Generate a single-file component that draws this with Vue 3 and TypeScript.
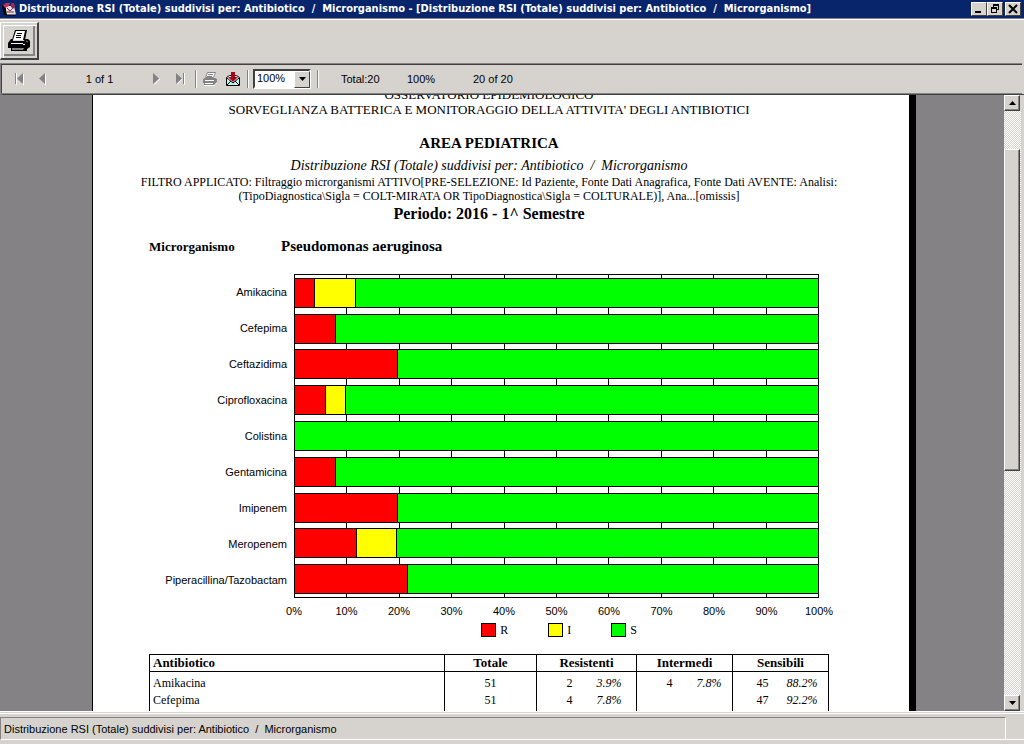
<script setup lang="ts">
import { ref } from 'vue'

interface Series {
  name: string
  r: number
  i: number
}

interface Row {
  name: string
  total: number
  r: [number, string] | null
  i: [number, string] | null
  s: [number, string] | null
}

const title = 'Distribuzione RSI (Totale) suddivisi per: Antibiotico  /  Microrganismo'
const zoom = ref('100%')

const series: Series[] = [
  { name: 'Amikacina', r: 3.9, i: 7.8 },
  { name: 'Cefepima', r: 7.8, i: 0 },
  { name: 'Ceftazidima', r: 19.6, i: 0 },
  { name: 'Ciprofloxacina', r: 5.9, i: 3.9 },
  { name: 'Colistina', r: 0, i: 0 },
  { name: 'Gentamicina', r: 7.8, i: 0 },
  { name: 'Imipenem', r: 19.6, i: 0 },
  { name: 'Meropenem', r: 11.8, i: 7.8 },
  { name: 'Piperacillina/Tazobactam', r: 21.6, i: 0 },
]

const ticks = Array.from({ length: 11 }, (_, n) => `${n * 10}%`)

const legend = [
  { key: 'r', label: 'R' },
  { key: 'i', label: 'I' },
  { key: 's', label: 'S' },
]

const rows: Row[] = [
  { name: 'Amikacina', total: 51, r: [2, '3.9%'], i: [4, '7.8%'], s: [45, '88.2%'] },
  { name: 'Cefepima', total: 51, r: [4, '7.8%'], i: null, s: [47, '92.2%'] },
]
</script>

<template>
  <div class="window">
    <header class="titlebar">
      <svg class="app-icon" viewBox="0 0 16 16" width="16" height="16" aria-hidden="true">
        <path d="M3 5h10l2 9H4z" fill="#e8e4e8" />
        <path d="M1 5l3-2 2 11H3z" fill="#000" />
        <path d="M2 4l3-2h4l-1 3-4 2z" fill="#c0305c" />
        <path d="M10 2h3l1 3-2 3-2-2z" fill="#a02850" />
        <path d="M6 7l3 3 4-4M6 11h7" stroke="#7a2440" fill="none" />
        <path d="M5 14h10" stroke="#000" />
      </svg>
      <h1>{{ title }} - [{{ title }}]</h1>
      <div class="caption-buttons">
        <button type="button" aria-label="Riduci a icona">
          <svg viewBox="0 0 12 10" width="12" height="10"><path d="M2 7h6v2H2z" /></svg>
        </button>
        <button type="button" aria-label="Ripristina">
          <svg viewBox="0 0 12 10" width="12" height="10">
            <path d="M4 0h6v6H8V5h1V2H5v1H4zM2 3h6v6H2zM3 5v3h4V5z" fill-rule="evenodd" />
          </svg>
        </button>
        <button type="button" class="close" aria-label="Chiudi">
          <svg viewBox="0 0 12 10" width="12" height="10">
            <path d="M2 1l8 8M10 1L2 9" stroke="#000" stroke-width="2" />
          </svg>
        </button>
      </div>
    </header>

    <div class="main-tools">
      <button type="button" class="print" aria-label="Stampa">
        <svg viewBox="0 0 22 23" width="22" height="23">
          <path d="M7 1h12l-2 10H4z" fill="#000" />
          <path d="M8 2h9l-2 9H5z" fill="#fff" />
          <path d="M9 4.500h5M8 6.500h5M8 8.500h5" stroke="#000" />
          <path d="M3 10h2v2h11l1-2h3l2 2v6l-3 2v2H3v-3H0v-5z" fill="#000" />
          <path d="M3 14.500h12M15 15.500h2" stroke="#fff" />
          <path d="M4 19h12l-1 2H4z" fill="#848284" />
          <path d="M18 12l2 1" stroke="#848284" />
        </svg>
      </button>
    </div>

    <nav class="report-tools">
      <button type="button" class="flat first" aria-label="Prima pagina">
        <svg viewBox="0 0 10 13" width="10" height="13">
          <path d="M2.500 1v12M9.500 2v11" stroke="#fff" />
          <path d="M1 1h1v11H1zM9 1v11L3 6.500z" fill="#848284" />
        </svg>
      </button>
      <button type="button" class="flat prev" aria-label="Pagina precedente">
        <svg viewBox="0 0 10 13" width="10" height="13">
          <path d="M8.500 2v11" stroke="#fff" />
          <path d="M8 1v11L2 6.500z" fill="#848284" />
        </svg>
      </button>
      <span class="pages">1 of 1</span>
      <button type="button" class="flat next" aria-label="Pagina successiva">
        <svg viewBox="0 0 10 13" width="10" height="13">
          <path d="M2 12.500L8 7" stroke="#fff" />
          <path d="M1 1v11l6-5.500z" fill="#848284" />
        </svg>
      </button>
      <button type="button" class="flat last" aria-label="Ultima pagina">
        <svg viewBox="0 0 10 13" width="10" height="13">
          <path d="M2 12.500L7 7M9.500 1v12" stroke="#fff" />
          <path d="M1 1v11l6-5.500zM8 1h1v11H8z" fill="#848284" />
        </svg>
      </button>
      <span class="sep"></span>
      <button type="button" class="flat" aria-label="Stampa report">
        <svg viewBox="0 0 16 16" width="16" height="16">
          <path d="M5 2h9l-2 5h3v5l-3 3H2v-3l-1-4 3-1z" fill="#fff" />
          <path d="M5.500 1.500h8l-2 5h-8zM6 3.500h5M5 5.500h5" stroke="#848284" fill="none" />
          <path d="M3 7h11l1 1v3l-3 3H2v-2H1V8zM3 9v1h9V9zM3 12v1h8v-1z" fill="#848284" fill-rule="evenodd" />
        </svg>
      </button>
      <button type="button" class="flat export" aria-label="Esporta">
        <svg viewBox="0 0 16 16" width="16" height="16">
          <path d="M1.500 6.500l3-2h7l3 2v8h-13z" fill="#fff" stroke="#000" />
          <path d="M2 7l6 5 6-5v7H2z" fill="#bdf3f3" />
          <path d="M2 14l4-4M14 14l-4-4M2 7l6 5 6-5" stroke="#000" fill="none" />
          <path d="M6 1h4v5h3L8 11 3 6h3z" fill="#a5041c" />
        </svg>
      </button>
      <span class="sep near"></span>
      <span class="zoom">
        <select v-model="zoom" aria-label="Zoom">
          <option>50%</option>
          <option>100%</option>
          <option>200%</option>
        </select>
        <span class="drop" aria-hidden="true">
          <svg viewBox="0 0 7 4" width="7" height="4"><path d="M0 0h7L3.500 4z" /></svg>
        </span>
      </span>
      <span class="sep near"></span>
      <span class="info total">Total:20</span>
      <span class="info percent">100%</span>
      <span class="info records">20 of 20</span>
    </nav>

    <main class="viewer">
      <div class="canvas">
        <article class="paper">
          <div class="heading">
            <p class="office">OSSERVATORIO EPIDEMIOLOGICO</p>
            <p class="office">SORVEGLIANZA BATTERICA E MONITORAGGIO DELLA ATTIVITA' DEGLI ANTIBIOTICI</p>
            <h2>AREA PEDIATRICA</h2>
            <p class="subtitle">{{ title }}</p>
            <p class="filter">
              FILTRO APPLICATO: Filtraggio microrganismi ATTIVO[PRE-SELEZIONE: Id Paziente, Fonte Dati Anagrafica, Fonte Dati AVENTE: Analisi:<br />
              (TipoDiagnostica\Sigla = COLT-MIRATA OR TipoDiagnostica\Sigla = COLTURALE)], Ana...[omissis]
            </p>
            <h3>Periodo: 2016 - 1^ Semestre</h3>
          </div>

          <div class="organism">
            <span class="caption">Microrganismo</span>
            <strong>Pseudomonas aeruginosa</strong>
          </div>

          <section class="chart" aria-label="Distribuzione RSI">
            <div class="names">
              <span v-for="s in series" :key="s.name">{{ s.name }}</span>
            </div>
            <div class="plot">
              <div class="grid"><i v-for="n in 10" :key="n"></i></div>
              <div class="bars">
                <div v-for="s in series" :key="s.name" class="bar">
                  <b v-if="s.r" class="r" :style="{ width: s.r + '%' }"></b>
                  <b v-if="s.i" class="i" :style="{ width: s.i + '%' }"></b>
                  <b class="s"></b>
                </div>
              </div>
            </div>
            <div class="scale">
              <div class="axis"><span v-for="t in ticks" :key="t">{{ t }}</span></div>
            </div>
            <div class="legend">
              <span v-for="l in legend" :key="l.key"><b :class="l.key"></b>{{ l.label }}</span>
            </div>
          </section>

          <table>
            <colgroup>
              <col class="c-name" />
              <col class="c-total" />
              <col class="c-count" /><col class="c-pct-wide" />
              <col class="c-count" /><col class="c-pct" />
              <col class="c-count" /><col class="c-pct" />
            </colgroup>
            <thead>
              <tr>
                <th class="name">Antibiotico</th>
                <th>Totale</th>
                <th colspan="2">Resistenti</th>
                <th colspan="2">Intermedi</th>
                <th colspan="2">Sensibili</th>
              </tr>
            </thead>
            <tbody>
              <tr v-for="row in rows" :key="row.name">
                <td class="name">{{ row.name }}</td>
                <td class="sum">{{ row.total }}</td>
                <template v-for="(v, n) in [row.r, row.i, row.s]" :key="n">
                  <td class="count">{{ v ? v[0] : '' }}</td>
                  <td class="pct"><em v-if="v">{{ v[1] }}</em></td>
                </template>
              </tr>
            </tbody>
          </table>
        </article>
      </div>

      <div class="scrollbar">
        <button type="button" aria-label="Scorri su">
          <svg viewBox="0 0 7 4" width="7" height="4"><path d="M0 4h7L3.500 0z" /></svg>
        </button>
        <div class="track"><div class="thumb"></div></div>
        <button type="button" aria-label="Scorri giù">
          <svg viewBox="0 0 7 4" width="7" height="4"><path d="M0 0h7L3.500 4z" /></svg>
        </button>
      </div>
    </main>

    <footer class="status">
      <span class="message">{{ title }}</span>
      <span class="corner"></span>
    </footer>
  </div>
</template>

<style>
body {
  margin: 0;
  background: #d6d3ce;
}
</style>

<style scoped>
.window {
  display: flex;
  flex-direction: column;
  height: 100vh;
  overflow: hidden;
  background: #d6d3ce;
  color: #000;
  font: 11px/14px "Liberation Sans", Arial, sans-serif;
}

.window * {
  box-sizing: border-box;
}

button {
  display: flex;
  align-items: center;
  justify-content: center;
  padding: 0;
  border: 1px solid;
  border-color: #fff #424142 #424142 #fff;
  border-radius: 0;
  background: #d6d3ce;
}

/* Title bar */
.titlebar {
  display: flex;
  align-items: center;
  flex: none;
  height: 18px;
  padding: 0 3px 0 1px;
  background: #08246b;
  color: #fff;
}

.titlebar h1 {
  flex: 1;
  min-width: 0;
  margin: 0 0 0 2px;
  overflow: hidden;
  white-space: pre;
  font: bold 11px/18px "DejaVu Sans Condensed", "DejaVu Sans", sans-serif;
}

.app-icon {
  flex: none;
}

.caption-buttons {
  display: flex;
}

.caption-buttons button {
  width: 16px;
  height: 14px;
}

.caption-buttons .close {
  margin-left: 2px;
}

/* Application toolbar */
.main-tools {
  flex: none;
  height: 45px;
  padding-top: 3px;
  border-top: 1px solid #848284;
  box-shadow: inset 0 2px 0 -1px #fff;
}

.print {
  width: 39px;
  height: 38px;
  border-width: 1px 2px 2px 1px;
  background: #d6d3ce;
  box-shadow: inset 2px 2px 0 #d6d3ce, inset 3px 3px 0 #fff, inset -2px -2px 0 #d6d3ce, inset -4px -4px 0 #848284;
}

/* Report toolbar */
.report-tools {
  display: flex;
  align-items: center;
  flex: none;
  height: 31px;
  margin-right: 2px;
  padding: 0 13px;
  border: solid #848284;
  border-width: 1px 0 1px 1px;
  box-shadow: inset 1px 1px 0 #424142;
  white-space: nowrap;
}

.flat {
  flex: none;
  border: 0;
  background: none;
}

.prev {
  margin-left: 13px;
}

.pages {
  width: 105px;
  text-align: center;
}

.last {
  margin-left: 13px;
}

.sep {
  flex: none;
  width: 2px;
  height: 18px;
  margin: 0 5px 0 10px;
  border-left: 1px solid #848284;
  border-right: 1px solid #fff;
}

.sep.near {
  margin: 0 4px 0 6px;
}

.export {
  margin-left: 7px;
}

.zoom {
  position: relative;
  flex: none;
  width: 58px;
  height: 20px;
}

.zoom select {
  appearance: none;
  width: 100%;
  height: 100%;
  padding: 0 0 1px 2px;
  border: 2px solid;
  border-color: #424142 #fff #fff #424142;
  border-radius: 0;
  background: #fff;
  color: #000;
  font: inherit;
}

.drop {
  position: absolute;
  top: 2px;
  right: 1px;
  bottom: 1px;
  display: flex;
  align-items: center;
  justify-content: center;
  width: 16px;
  border: 1px solid;
  border-color: #fff #424142 #424142 #fff;
  background: #d6d3ce;
  pointer-events: none;
}

.total {
  width: 66px;
  margin-left: 18px;
}

.percent {
  width: 66px;
}

/* Report viewer */
.viewer {
  display: flex;
  flex: 1;
  min-height: 0;
  padding-right: 3px;
  border-left: 3px solid #848284;
  border-top: 1px solid #424142;
}

.canvas {
  flex: 1;
  min-width: 0;
  padding: 0 88px 0 89px;
  overflow: hidden;
  background: #848284;
}

.paper {
  display: flex;
  flex-direction: column;
  height: calc(100% + 8px);
  margin-top: -8px;
  padding: 0 80px 0 56px;
  border-left: 1px solid #000;
  border-right: 7px solid #000;
  background: #fff;
  font: 13px/14px "Liberation Serif", "Times New Roman", serif;
}

.heading {
  text-align: center;
  white-space: nowrap;
}

.heading p,
.heading h2,
.heading h3 {
  display: flex;
  flex-direction: column;
  align-items: center;
  margin: 0;
}

.heading .office {
  font-size: 13px;
  line-height: 15px;
}

.heading h2 {
  margin-top: 17px;
  font-size: 15px;
  line-height: 18px;
}

.heading .subtitle {
  margin-top: 6px;
  white-space: pre;
  font-style: italic;
  font-size: 14px;
  line-height: 16px;
}

.heading .filter {
  display: block;
  margin: 1px -80px 0;
  font-size: 12px;
  line-height: 14px;
}

.heading h3 {
  margin-top: 2px;
  font-size: 16px;
  line-height: 18px;
}

.organism {
  display: flex;
  align-items: baseline;
  margin-top: 14px;
  font-weight: bold;
  line-height: 18px;
}

.organism .caption {
  width: 132px;
  font-size: 13px;
}

.organism strong {
  font-size: 15px;
}

/* Stacked bar chart */
.chart {
  display: grid;
  grid-template-columns: 138px 1fr;
  column-gap: 7px;
  margin-top: 18px;
  padding-right: 10px;
  font: 11px/14px "Liberation Sans", Arial, sans-serif;
}

.names {
  display: grid;
  grid-auto-rows: 1fr;
  align-items: center;
  text-align: right;
}

.plot {
  display: grid;
  height: 324px;
  border: 1px solid #000;
}

.grid,
.bars {
  grid-area: 1 / 1;
}

.grid {
  display: flex;
}

.grid i {
  flex: 1;
  border-right: 1px solid #000;
}

.grid i:last-child {
  border-right: 0;
}

.bars {
  display: grid;
  grid-auto-rows: 1fr;
  align-items: center;
}

.bar {
  display: flex;
  height: 30px;
  border: solid #000;
  border-width: 1px 0;
}

.bar .r,
.bar .i {
  border-right: 1px solid #000;
}

.bar .s {
  flex: 1;
}

.r {
  background: #f00;
}

.i {
  background: #ff0;
}

.s {
  background: #0f0;
}

.scale {
  grid-column: 2;
  margin-top: 6px;
}

.axis {
  display: grid;
  grid-template-columns: repeat(11, 1fr);
  margin: 0 -5%;
  text-align: center;
}

.legend {
  grid-column: 2;
  display: flex;
  justify-content: center;
  gap: 40px;
  margin-top: 5px;
  padding-left: 5px;
  font: 12px/14px "Liberation Serif", "Times New Roman", serif;
}

.legend span {
  display: flex;
  align-items: center;
  gap: 4px;
}

.legend b {
  width: 15px;
  height: 14px;
  border: 1px solid #000;
}

/* Results table */
table {
  flex: 1;
  width: 100%;
  margin-top: 17px;
  border-collapse: collapse;
  table-layout: fixed;
  font-size: 12px;
  line-height: 17px;
}

.c-total {
  width: 92px;
}

.c-count {
  width: 36px;
}

.c-pct-wide {
  width: 64px;
}

.c-pct {
  width: 60px;
}

th {
  height: 16px;
  padding: 0;
  border: 1px solid #000;
  font-size: 13px;
  line-height: 16px;
}

td {
  padding: 0;
  vertical-align: top;
}

tbody tr:first-child td {
  padding-top: 3px;
}

tbody tr:last-child td {
  padding-bottom: 4px;
}

td.name,
td.sum,
td.pct {
  border-right: 1px solid #000;
}

.name {
  padding-left: 3px;
  text-align: left;
}

td.name {
  border-left: 1px solid #000;
}

.sum {
  text-align: center;
}

.count {
  text-align: right;
}

.pct em {
  display: block;
  width: 49px;
  text-align: right;
}

/* Vertical scroll bar */
.scrollbar {
  display: flex;
  flex-direction: column;
  flex: none;
  width: 17px;
}

.scrollbar button {
  flex: none;
  width: 16px;
  height: 16px;
  box-shadow: inset -1px -1px 0 #848284;
}

.track {
  flex: 1;
  padding: 38px 1px 0 0;
  background: conic-gradient(#fff 25%, #d6d3ce 0 50%, #fff 0 75%, #d6d3ce 0) 0 0 / 2px 2px;
}

.thumb {
  height: 59%;
  border: 1px solid;
  border-color: #fff #424142 #424142 #fff;
  background: #d6d3ce;
  box-shadow: inset -1px -1px 0 #848284;
}

/* Status bar */
.status {
  display: flex;
  flex: none;
  height: 33px;
  padding: 5px 0 4px;
  border-top: 1px solid #fff;
  box-shadow: inset 0 1px 0 #d6d3ce, inset 0 2px 0 #fff;
}

.message {
  flex: 1;
  padding-left: 3px;
  border: 1px solid;
  border-color: #848284 #fff #fff #848284;
  white-space: pre;
  line-height: 22px;
}

.corner {
  width: 18px;
  border-bottom: 1px solid #fff;
}
</style>
